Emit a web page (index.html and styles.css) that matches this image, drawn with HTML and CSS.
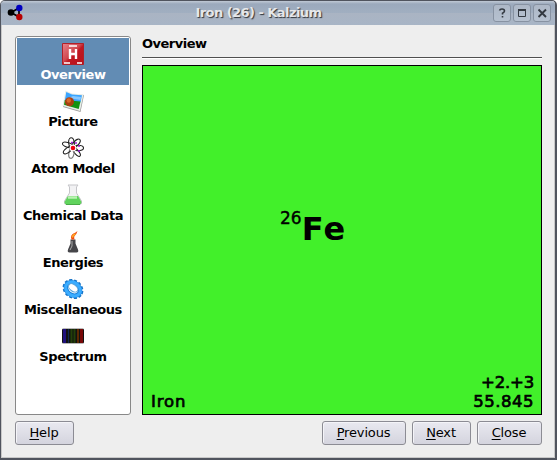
FILE: index.html
```html
<!DOCTYPE html>
<html lang="en">
<head>
<meta charset="utf-8">
<title>Iron (26) - Kalzium</title>
<link rel="stylesheet" href="styles.css">
</head>
<body>
<div class="window">
  <header class="titlebar">
    <svg class="app-icon" width="17" height="17" viewBox="0 0 17 17"><path d="M4 8.500 12 4v9z" fill="none" stroke="#000" stroke-width="1.700"/><circle cx="4" cy="8.500" r="3.300"/><circle cx="12.300" cy="4" r="3.200" fill="#0000c0"/><circle cx="12.300" cy="13" r="3.200" fill="#b80000"/></svg>
    <h1>Iron (26) - Kalzium</h1>
    <div class="controls">
      <span class="control"><svg width="16" height="16" viewBox="0 0 16 16"><path d="M5.500 5.500Q6 4 8 4Q10.500 4 10.500 6Q10.500 7 8.500 8.200V9.500M8.500 11v1.500" fill="none" stroke="#333941" stroke-width="1.600"/></svg></span>
      <span class="control"><svg width="16" height="16" viewBox="0 0 16 16"><path d="M4.500 5v6.500h7V5" fill="none" stroke="#333941"/><path d="M4 4h8v2H4z" fill="#333941"/></svg></span>
      <span class="control"><svg width="16" height="16" viewBox="0 0 16 16"><path d="m4.500 4.500 7.500 7.500m0-7.500L4.500 12" fill="none" stroke="#333941" stroke-width="1.900"/></svg></span>
    </div>
  </header>
  <main class="content">
    <nav class="sidebar">
      <div class="item selected">
        <svg width="22" height="22" viewBox="0 0 22 22"><defs><linearGradient id="red" x1="0" y1="0" x2="1" y2="1"><stop offset="0" stop-color="#e8828a"/><stop offset=".45" stop-color="#d04850"/><stop offset=".55" stop-color="#c01822"/><stop offset="1" stop-color="#b8101a"/></linearGradient></defs><path d="M.5.500h21v21H.5z" fill="url(#red)" stroke="#b02028"/><path d="M7 3h8M2 20h6M15 20h5" stroke="#fff" stroke-width="1.600"/><path d="M8 6v10M14 6v10M8 11h6" stroke="#fff" stroke-width="2.400"/></svg>
        <span>Overview</span>
      </div>
      <div class="item">
        <svg width="22" height="22" viewBox="0 0 22 22"><path d="m4 1.500 6 2.500 12 1-3.500 17L1 17z" fill="#999"/><path d="m3.500.500 6.500 3 11.500 1-3.500 16.500L.5 16z" fill="#e8eee8"/><path d="m4.300 2 5.700 2.500 10 .800-1.500 7L2.700 11z" fill="#3aa4ff"/><path d="m2.800 10 15.700 1.500L16.700 19 2 14.800z" fill="#139313"/><path d="m6 8 5-2 8 1-.6 3z" fill="#87c8ff"/><circle cx="7.500" cy="11.800" r="4.500" fill="#a84010"/><circle cx="6.800" cy="10.500" r="2.200" fill="#d9682a"/></svg>
        <span>Picture</span>
      </div>
      <div class="item">
        <svg width="22" height="22" viewBox="0 0 22 22"><g fill="none" stroke="#222" stroke-width="1.100"><ellipse cx="9.500" cy="6" rx="2.800" ry="5.300" transform="rotate(-8 9.500 6)"/><ellipse cx="14" cy="6.500" rx="2.600" ry="5.500" transform="rotate(42 14 6.500)"/><ellipse cx="16" cy="11" rx="5.500" ry="2.700"/><ellipse cx="14.500" cy="15" rx="5.300" ry="2.200" transform="rotate(50 14.500 15)"/><ellipse cx="9.500" cy="16" rx="2.600" ry="5.400" transform="rotate(10 9.500 16)" stroke="#777"/><ellipse cx="6" cy="13" rx="5.500" ry="2.400" transform="rotate(-38 6 13)"/><ellipse cx="6" cy="8" rx="5.800" ry="2.400" transform="rotate(18 6 8)"/></g><circle cx="11" cy="11" r="3.400" fill="#fff"/><circle cx="11" cy="11" r="2.300" fill="#f00010"/><path d="M9 5.500h2M13 6h2M16 9h2M16 14h2" stroke="#a018e0" stroke-width="1.700"/></svg>
        <span>Atom Model</span>
      </div>
      <div class="item">
        <svg width="22" height="22" viewBox="0 0 22 22"><path d="M6 1h10l-1.500 2v6l5 8q1 3.500-2 3.500h-13q-3 0-2-3.500l5-8V3z" fill="#f2f2f4" stroke="#c5c5c9"/><path d="M6 12h10l3.500 6q0 2-2 2.500H4.500q-2-.500-2-2.500z" fill="#60d35d"/><path d="M6 13.500h9" stroke="#b8f2b2" stroke-width="2.500"/><path d="M4 20.500h14" stroke="#48aa46"/></svg>
        <span>Chemical Data</span>
      </div>
      <div class="item">
        <svg width="22" height="22" viewBox="0 0 22 22"><path d="M8.500 8.500h5v4l2.500 6q1 3-1.500 3h-7q-2.500 0-1.500-3l2.500-6z" fill="#46464a"/><path d="M10 10v5l-2 4" fill="none" stroke="#aaa"/><path d="M9.500 8.500q-2-5 4-7l2-1.500q-1 3-2 4-2 1-1 4.500z" fill="#f04a10"/><path d="M10.500 6.500q0-2.500 3-3.500" fill="none" stroke="#ffad24" stroke-width="1.500"/></svg>
        <span>Energies</span>
      </div>
      <div class="item">
        <svg width="22" height="22" viewBox="0 0 22 22"><g transform="rotate(38 11 11)"><ellipse cx="11" cy="11" rx="10" ry="8.300" fill="none" stroke="#1673c7" stroke-width="2" stroke-dasharray="3 1.800"/><ellipse cx="11" cy="11" rx="7.700" ry="6" fill="#fff" stroke="#1c83dc" stroke-width="4.600"/><ellipse cx="11" cy="11" rx="8" ry="6.300" fill="none" stroke="#3aacff" stroke-width="3"/><ellipse cx="10.500" cy="10" rx="5.300" ry="3.300" fill="#fff" stroke="#5ca5dc"/></g></svg>
        <span>Miscellaneous</span>
      </div>
      <div class="item">
        <svg width="22" height="22" viewBox="0 0 22 22"><rect y="3" width="22" height="16" rx="1.500" fill="#b8b8b8"/><rect y="4" width="22" height="14" rx="1" fill="#111"/><path d="M2.500 4v14" stroke="#20107c" stroke-width="3"/><path d="M6.500 4v14" stroke="#102850"/><path d="M9.500 4v14M12.500 4v14" stroke="#234008" stroke-width="2"/><path d="M16 4v14" stroke="#5c2800" stroke-width="2"/><path d="M19.500 4v14" stroke="#780808" stroke-width="3"/></svg>
        <span>Spectrum</span>
      </div>
    </nav>
    <section class="page">
      <h2>Overview</h2>
      <div class="element">
        <div class="symbol"><sup>26</sup><b>Fe</b></div>
        <div class="facts"><span class="name">Iron</span><span class="values"><span class="states">+2.+3</span><br>55.845</span></div>
      </div>
    </section>
  </main>
  <footer class="actions">
    <button class="help"><u>H</u>elp</button>
    <button class="previous"><u>P</u>revious</button>
    <button class="next"><u>N</u>ext</button>
    <button class="close"><u>C</u>lose</button>
  </footer>
</div>
</body>
</html>
```
FILE: styles.css
```css
* { box-sizing: border-box; }
body { margin: 0; background: #fff; font: 13px "DejaVu Sans", sans-serif; color: #000; }
.window { width: 557px; height: 460px; display: flex; flex-direction: column; background: #eee; border: 1px solid #50545e; border-right-width: 2px; border-bottom-width: 2px; border-radius: 5px 5px 0 0; overflow: hidden; box-shadow: inset 1px 0 #c8c8c8, inset -1px -1px #c8c8c8; }
.titlebar { height: 24px; flex: none; display: flex; align-items: center; padding: 0 4px 0 6px; background: linear-gradient(#c0c9d5 0, #9ba9bc 3px, #a1afc1 50%, #aab4c3 52%, #a8b5c6 100%); }
.app-icon { flex: none; margin-top: -1px; }
h1 { flex: 1; margin: 0; text-align: center; font-size: 13px; letter-spacing: -.55px; line-height: 26px; color: #e6e7e9; text-shadow: 1px 1px 1px #30343a; }
.controls { display: flex; gap: 2px; }
.control { width: 18px; height: 18px; display: flex; border: 1px solid #8792a2; border-radius: 3px; background: linear-gradient(#aeb8c7, #b6c1d0); }
.content { display: flex; gap: 11px; padding: 11px 13px 0 14px; }
.sidebar { width: 116px; height: 379px; padding: 1px; border: 1px solid #888; border-radius: 3px; background: #fff; flex: none; }
.item { height: 47px; padding-top: 5px; display: flex; flex-direction: column; align-items: center; font-weight: bold; letter-spacing: -.42px; line-height: 15px; white-space: nowrap; }
.item svg { flex: none; margin-bottom: 2px; }
.selected { background: #628cb4; color: #fff; }
.page { width: 400px; }
h2 { margin: 0 0 7px; height: 22px; font-size: 13px; letter-spacing: -.5px; line-height: 15px; border-bottom: 1px solid #505050; box-shadow: 0 1px #fff; }
.element { height: 350px; border: 1px solid #000; background: #42f02a; display: flex; flex-direction: column; justify-content: space-between; }
.symbol { display: flex; padding: 143px 0 0 137px; }
sup { font-size: 17px; line-height: 18px; -webkit-text-stroke: .4px #000; }
.symbol b { font-size: 32px; letter-spacing: 1.200px; line-height: 40px; }
.facts { display: flex; justify-content: space-between; align-items: flex-end; padding: 0 7px 3px 8px; font-size: 16.500px; letter-spacing: .5px; line-height: 19px; -webkit-text-stroke: .7px #000; }
.name { letter-spacing: .9px; }
.values { text-align: right; }
.states { letter-spacing: -.2px; }
.actions { display: flex; gap: 6px; padding: 6px 13px 0 14px; }
button { height: 24px; padding: 0 1px 1px 0; border: 1px solid #8c8c94; border-radius: 3px; background: linear-gradient(#e9e9f0, #d4d4de); box-shadow: inset 1px 1px #f4f4f8; font: 13px "DejaVu Sans", sans-serif; letter-spacing: -.15px; color: #000; }
u { text-underline-offset: 2px; text-decoration-thickness: 1px; }
.help { width: 59px; margin-right: auto; }
.previous { width: 84px; }
.next { width: 59px; }
.close { width: 65px; }
```
